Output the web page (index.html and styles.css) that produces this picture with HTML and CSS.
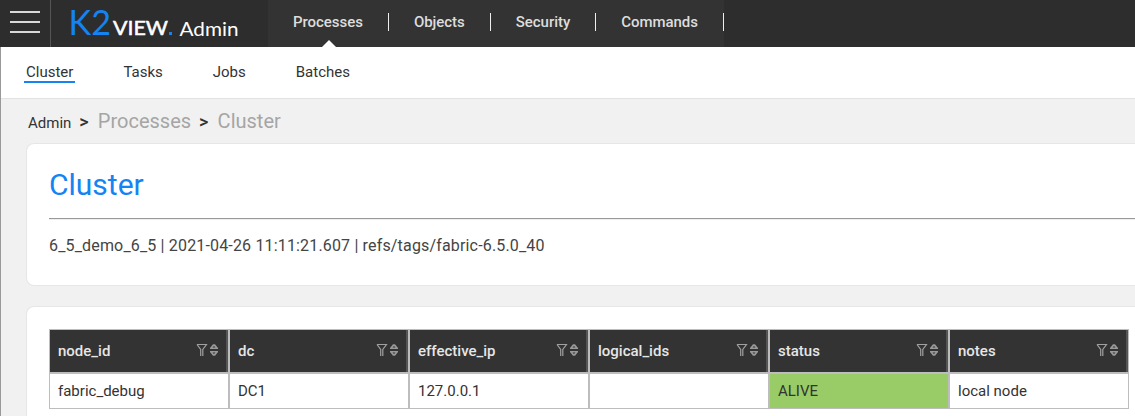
FILE: index.html
```html
<!DOCTYPE html>
<html lang="en">
<head>
<meta charset="utf-8">
<title>K2View Admin</title>
<link rel="stylesheet" href="styles.css">
</head>
<body>
<svg class="defs" width="0" height="0">
  <symbol id="grid-icons" viewBox="0 0 22 12">
    <path d="M1 .5h9.500L6.800 5.500v6.500M1 .5l3.700 5v6.500" fill="none" stroke="#a0a0a0" stroke-width="1.200"/>
    <path d="M14 5V4l3-3.700h2L22 4v1zM14 7v1l3 3.700h2L22 8V7z" fill="#999"/>
    <path d="M16.500 3.500h3L18 2zM16.500 8.500h3L18 10z" fill="#333"/>
  </symbol>
</svg>
<header class="topbar">
  <button class="burger" aria-label="Menu"><i></i><i></i><i></i></button>
  <svg class="logo" width="217" height="47" viewBox="51 0 217 47">
    <text class="k2" x="68.500" y="34.500" textLength="42.500" lengthAdjust="spacingAndGlyphs">K2</text>
    <text class="view" x="113" y="34.500" textLength="55" lengthAdjust="spacingAndGlyphs">VIEW</text>
    <rect x="169" y="32" width="3" height="3" fill="#1483f3"/>
    <text class="admin" x="179.500" y="36" textLength="59" lengthAdjust="spacingAndGlyphs">Admin</text>
  </svg>
  <nav class="mainnav">
    <a class="active">Processes</a><a>Objects</a><a>Security</a><a>Commands</a>
  </nav>
</header>
<div class="page">
  <nav class="subnav">
    <a class="current">Cluster</a><a>Tasks</a><a>Jobs</a><a>Batches</a>
  </nav>
  <div class="crumbs"><span>Admin</span><b>&gt;</b><span class="crumb">Processes</span><b>&gt;</b><span class="crumb">Cluster</span></div>
  <section class="card intro">
    <h1>Cluster</h1>
    <hr>
    <p>6_5_demo_6_5 | 2021-04-26 11:11:21.607 | refs/tags/fabric-6.5.0_40</p>
  </section>
  <section class="card listing">
    <div class="grid">
      <div class="th">node_id<svg><use href="#grid-icons"/></svg></div>
      <div class="th">dc<svg><use href="#grid-icons"/></svg></div>
      <div class="th">effective_ip<svg><use href="#grid-icons"/></svg></div>
      <div class="th">logical_ids<svg><use href="#grid-icons"/></svg></div>
      <div class="th">status<svg><use href="#grid-icons"/></svg></div>
      <div class="th">notes<svg><use href="#grid-icons"/></svg></div>
      <div class="td">fabric_debug</div>
      <div class="td">DC1</div>
      <div class="td">127.0.0.1</div>
      <div class="td"></div>
      <div class="td alive">ALIVE</div>
      <div class="td">local node</div>
    </div>
  </section>
</div>
</body>
</html>
```

FILE: styles.css
```css
* { box-sizing: border-box; }
body { margin: 0; height: 416px; background: #f1f1f1; font-family: Roboto, "Liberation Sans", sans-serif; font-size: 15px; color: #333; }
.defs { display: block; height: 0; }

.topbar { display: flex; height: 47px; background: #2d2d2d; }
.burger { width: 51px; padding: 11px 10px 0; border: 0; border-right: 1px solid #555; background: none; display: flex; flex-direction: column; gap: 8px; }
.burger i { display: block; width: 30px; height: 2px; background: #d8d8d8; }
.logo { width: 217px; }
.k2 { font: 400 34.5px Lato, sans-serif; fill: #1483f3; }
.view { font: 400 19.5px Lato, sans-serif; fill: #fff; stroke: #fff; stroke-width: 0.5px; }
.admin { font: 400 19px Lato, sans-serif; fill: #fff; }
.mainnav { display: flex; align-items: center; height: 47px; width: 456px; background: #333; }
.mainnav a { position: relative; height: 18px; line-height: 18px; padding: 0 25px; margin-top: -4px; border-right: 1px solid #eee; font-weight: 500; letter-spacing: -0.04px; color: #ddd; white-space: nowrap; }
.mainnav .active::after { content: ""; position: absolute; left: 54px; top: 27px; border: 7px solid transparent; border-top: 0; border-bottom-color: #fff; }

.page { height: 369px; border-left: 1px solid #999; }
.subnav { display: flex; height: 52px; padding: 15px 0 0 23px; gap: 46px; background: #fff; border-bottom: 1px solid #e2e2e2; }
.subnav a { height: 21px; line-height: 20px; padding: 0 2px; }
.subnav .current { border-bottom: 2px solid #1483f3; }
.crumbs { display: flex; align-items: baseline; height: 44px; padding-left: 27px; line-height: 44px; white-space: nowrap; }
.crumbs b { width: 26.5px; padding-left: 8px; font-size: 18px; font-weight: 500; }
.crumb { font-size: 20px; color: #a5a5a5; }

.card { margin-left: 25px; padding-left: 22px; border: 1px solid #e6e6e6; border-right: 0; border-radius: 8px 0 0 8px; background: #fff; }
.intro { height: 143px; }
.intro h1 { margin: 22px 0 0; height: 38px; line-height: 38px; font-size: 30px; font-weight: 400; color: #1483f3; }
.intro hr { height: 2px; margin: 14px 0 0; border: 0; border-top: 1px solid #999; border-bottom: 1px solid #eee; }
.intro p { margin: 16px 0 0; line-height: 20px; font-size: 16px; letter-spacing: 0.165px; color: #444; }
.listing { height: 110px; margin-top: 20px; padding-top: 22px; border-bottom: 0; border-radius: 8px 0 0 0; }
.grid { display: grid; grid-template-columns: repeat(6, 180px); grid-template-rows: 44px 36px; }
.th, .td { display: flex; align-items: center; padding: 0 8px; border: 1px solid #bdbdbd; }
.th { justify-content: space-between; background: #333; color: #e6e6e6; font-weight: 500; box-shadow: inset -2px 0 #555; }
.th svg { width: 22px; height: 12px; margin: 0 2px 2px 0; }
.alive { background: #9c6; }
```
